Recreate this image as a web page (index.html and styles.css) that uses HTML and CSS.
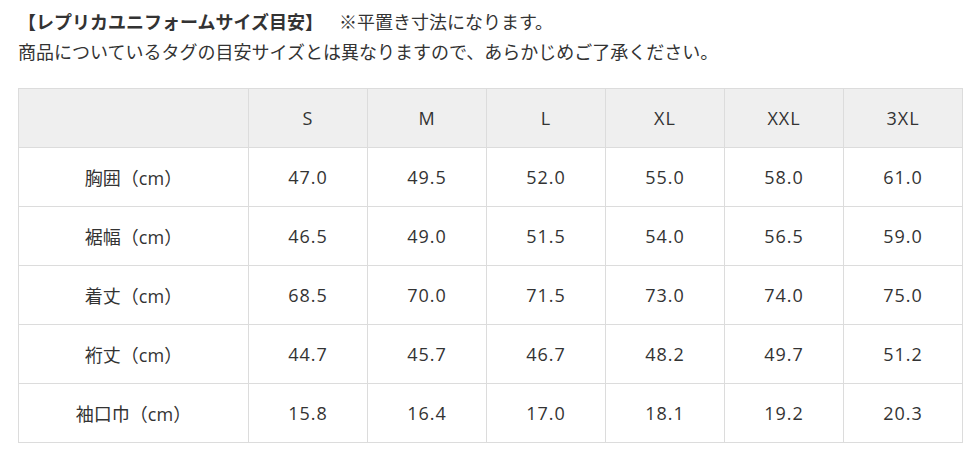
FILE: index.html
```html
<!DOCTYPE html>
<html lang="ja">
<head>
<meta charset="utf-8">
<link rel="stylesheet" href="styles.css">
</head>
<body>
<div class="page">
  <div class="notes">
    <p class="line"><span class="title">【レプリカユニフォームサイズ目安】</span><span class="note">※平置き寸法になります。</span></p>
    <p class="line">商品についているタグの目安サイズとは異なりますので、あらかじめご了承ください。</p>
  </div>
  <table class="size-table">
    <thead>
      <tr><th class="label"></th><th>S</th><th>M</th><th>L</th><th>XL</th><th>XXL</th><th>3XL</th></tr>
    </thead>
    <tbody>
      <tr><td class="label">胸囲（cm）</td><td>47.0</td><td>49.5</td><td>52.0</td><td>55.0</td><td>58.0</td><td>61.0</td></tr>
      <tr><td class="label">裾幅（cm）</td><td>46.5</td><td>49.0</td><td>51.5</td><td>54.0</td><td>56.5</td><td>59.0</td></tr>
      <tr><td class="label">着丈（cm）</td><td>68.5</td><td>70.0</td><td>71.5</td><td>73.0</td><td>74.0</td><td>75.0</td></tr>
      <tr><td class="label">裄丈（cm）</td><td>44.7</td><td>45.7</td><td>46.7</td><td>48.2</td><td>49.7</td><td>51.2</td></tr>
      <tr><td class="label">袖口巾（cm）</td><td>15.8</td><td>16.4</td><td>17.0</td><td>18.1</td><td>19.2</td><td>20.3</td></tr>
    </tbody>
  </table>
</div>
</body>
</html>
```

FILE: styles.css
```css
html, body {
  margin: 0;
  padding: 0;
  background: #ffffff;
}
body {
  font-family: "Open Sans", "Noto Sans CJK JP", sans-serif;
  color: #333333;
  font-size: 18px;
}
.page {
  padding: 7px 18px 0 18px;
}
.notes {
  margin-bottom: 21px;
}
.line {
  margin: 0;
  line-height: 30px;
  white-space: nowrap;
}
.title {
  font-weight: bold;
}
.note {
  margin-left: 16px;
}
.size-table {
  border-collapse: collapse;
  width: 945px;
  table-layout: fixed;
}
.size-table th,
.size-table td {
  border: 1px solid #dcdcdc;
  height: 58px;
  padding: 0;
  text-align: center;
  vertical-align: middle;
  font-weight: normal;
  color: #333333;
  letter-spacing: 1px;
}
.size-table th {
  background: #efefef;
}
.size-table .label {
  width: 229px;
  letter-spacing: 0;
}
```
